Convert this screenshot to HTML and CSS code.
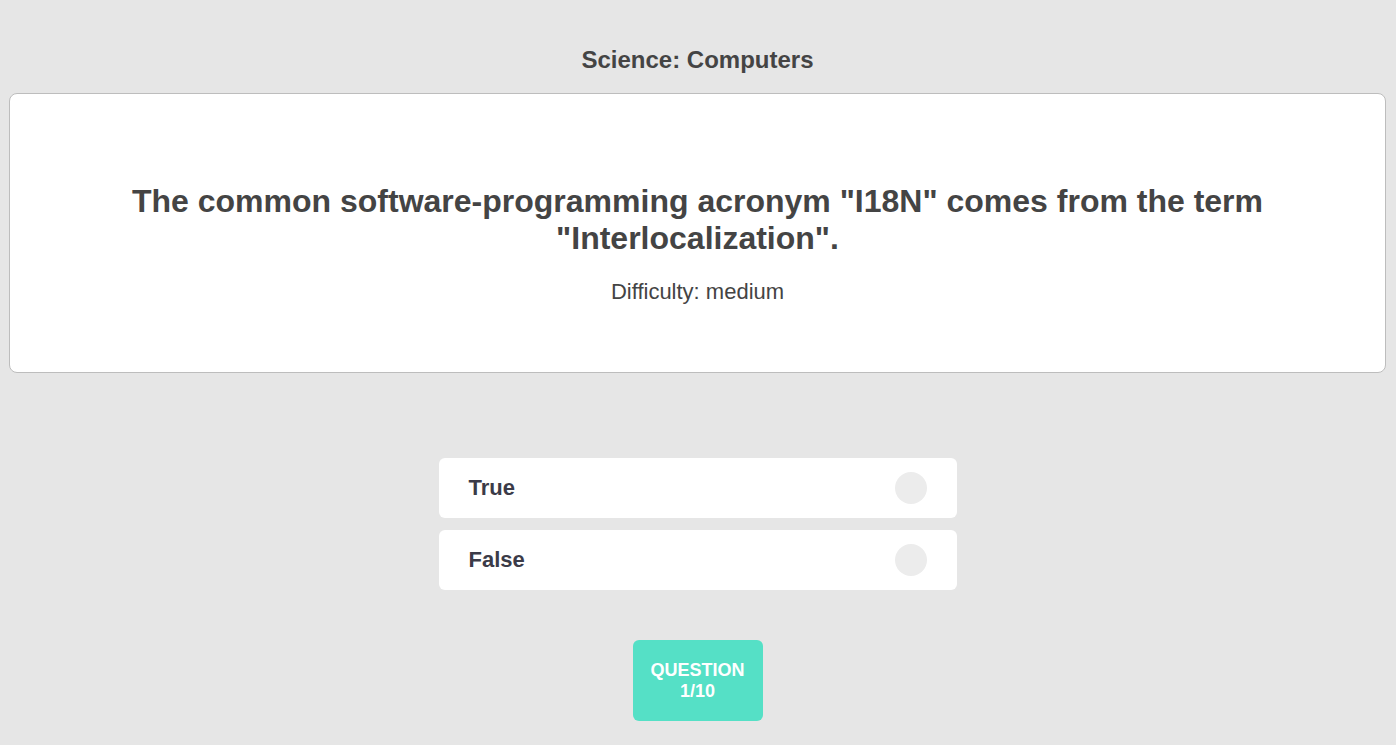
FILE: index.html
```html
<!DOCTYPE html>
<html>
<head>
<meta charset="utf-8">
<link rel="stylesheet" href="styles.css">
</head>
<body>
<main class="page">
  <h2 class="category">Science: Computers</h2>
  <section class="card">
    <h1 class="question">The common software-programming acronym "I18N" comes from the term "Interlocalization".</h1>
    <p class="difficulty">Difficulty: medium</p>
  </section>
  <div class="answers">
    <div class="option"><span class="label">True</span><span class="radio"></span></div>
    <div class="option"><span class="label">False</span><span class="radio"></span></div>
  </div>
  <button class="counter">QUESTION<br>1/10</button>
</main>
</body>
</html>
```
FILE: styles.css
```css
html, body {
  margin: 0;
  padding: 0;
  background: #e6e6e6;
}
body {
  font-family: "Liberation Sans", Arial, sans-serif;
  color: #444444;
}
.page {
  padding: 46px 10px 0 9px;
  display: flex;
  flex-direction: column;
  align-items: center;
}
.category {
  margin: 0 0 20px;
  font-size: 24px;
  line-height: 27px;
  font-weight: bold;
  color: #444444;
}
.card {
  align-self: stretch;
  background: #ffffff;
  border: 1px solid #bdbdbd;
  border-radius: 8px;
  padding: 89px 40px 69px;
  text-align: center;
}
.question {
  margin: 0;
  font-size: 32px;
  line-height: 37px;
  font-weight: bold;
  color: #444444;
  padding: 0 60px;
}
.difficulty {
  margin: 23px 0 0;
  font-size: 22px;
  line-height: 23px;
  color: #444444;
}
.answers {
  margin-top: 85px;
  width: 518px;
  display: flex;
  flex-direction: column;
  gap: 12px;
}
.option {
  height: 60px;
  background: #ffffff;
  border-radius: 6px;
  display: flex;
  align-items: center;
  justify-content: space-between;
  padding: 0 30px;
  box-sizing: border-box;
}
.label {
  font-size: 22px;
  font-weight: bold;
  color: #3b3b48;
}
.radio {
  width: 32px;
  height: 32px;
  border-radius: 50%;
  background: #ececec;
}
.counter {
  margin-top: 50px;
  width: 130px;
  height: 81px;
  border: none;
  border-radius: 6px;
  background: #55e0c6;
  color: #ffffff;
  font-family: "Liberation Sans", Arial, sans-serif;
  font-size: 18px;
  line-height: 21px;
  font-weight: bold;
  padding: 0;
}
```
